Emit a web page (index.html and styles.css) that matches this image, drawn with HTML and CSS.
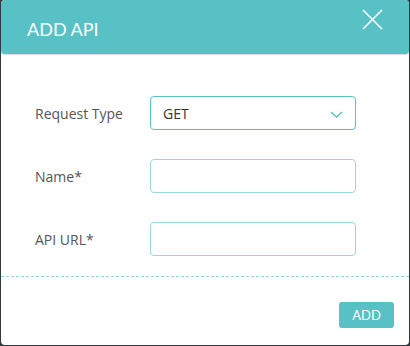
FILE: index.html
```html
<!DOCTYPE html>
<html lang="en">
<head>
  <meta charset="UTF-8" />
  <title>Add API</title>
  <link rel="stylesheet" href="styles.css">
</head>
<body>

  <!-- Modal -->
  <div class="modal">
    <div class="modal-header">
      <h2 class="modal-title">ADD API</h2>
      <button class="modal-close" aria-label="Close">
        <svg width="21" height="21" viewBox="0 0 21 21">
          <path d="M1 1 L20 20 M20 1 L1 20" stroke="#fff" stroke-width="1.6" fill="none"/>
        </svg>
      </button>
    </div>

    <div class="modal-body">
      <div class="form-row">
        <label class="form-label">Request Type</label>
        <div class="form-select">
          <span>GET</span>
          <svg width="13" height="7" viewBox="0 0 13 7">
            <path d="M1 1 L6.5 6 L12 1" stroke="#57c1c6" stroke-width="1.4" fill="none"/>
          </svg>
        </div>
      </div>
      <div class="form-row">
        <label class="form-label">Name*</label>
        <input class="form-input" type="text">
      </div>
      <div class="form-row">
        <label class="form-label">API URL*</label>
        <input class="form-input" type="text">
      </div>
    </div>

    <div class="modal-footer">
      <button class="btn-add">ADD</button>
    </div>
  </div>

</body>
</html>
```

FILE: styles.css
```css
/* ================================
   Base
================================= */
* {
  margin: 0;
  padding: 0;
  box-sizing: border-box;
}

:root {
  --teal: #57c1c6;
  --teal-light: #9dd6d9;
  --text: #555;
}

body {
  width: 410px;
  height: 346px;
  background: #2f3b3c;
  padding: 0 1px 1px 1px;
  font-family: Lato, "Open Sans", sans-serif;
  overflow: hidden;
}

/* ================================
   Modal
================================= */
.modal {
  height: 345px;
  background: #fff;
  border-radius: 4px;
  display: flex;
  flex-direction: column;
}

.modal-header {
  height: 55px;
  background: var(--teal);
  border-radius: 4px;
  border-bottom: 1px solid #d8dcdc;
  display: flex;
  align-items: flex-start;
  justify-content: space-between;
  padding: 0 26px;
  flex: none;
}

.modal-title {
  font-size: 18px;
  font-weight: 400;
  color: #fff;
  margin-top: 18px;
}

.modal-close {
  background: none;
  border: none;
  margin-top: 9px;
  width: 21px;
  height: 21px;
}

.modal-body {
  height: 222px;
  flex: none;
  padding: 41px 53px 0 34px;
  display: flex;
  flex-direction: column;
  gap: 29px;
  border-bottom: 1px dashed var(--teal-light);
  font-family: "Open Sans", Lato, sans-serif;
}

.form-row {
  display: flex;
  align-items: center;
}

.form-label {
  width: 115px;
  font-size: 14px;
  color: var(--text);
}

.form-select,
.form-input {
  width: 206px;
  height: 34px;
  border-radius: 4px;
  background: #fff;
}

.form-select {
  border: 1px solid var(--teal);
  display: flex;
  align-items: center;
  justify-content: space-between;
  padding: 0 12px;
  font-size: 14px;
  color: #333;
}

.form-select svg {
  margin-top: 2px;
}

.form-input {
  border: 1px solid var(--teal-light);
  outline: none;
  font-family: inherit;
}

.modal-footer {
  display: flex;
  justify-content: flex-end;
  padding: 25px 15px 0 0;
}

.btn-add {
  width: 55px;
  height: 26px;
  background: var(--teal);
  color: #fff;
  border: none;
  border-radius: 3px;
  font-family: Lato, sans-serif;
  font-size: 13px;
}
```
